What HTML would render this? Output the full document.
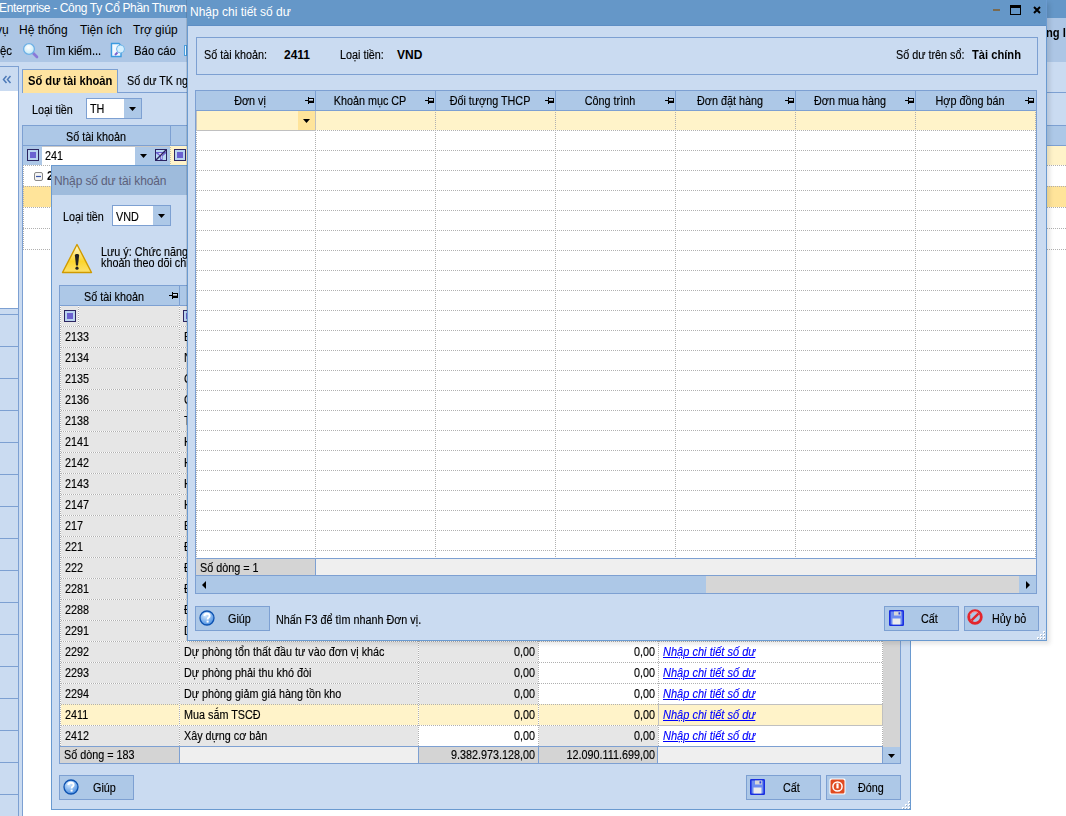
<!DOCTYPE html><html><head><meta charset="utf-8"><style>
*{margin:0;padding:0;box-sizing:border-box}
html,body{width:1066px;height:816px;overflow:hidden;background:#fff;font-family:"Liberation Sans",sans-serif;font-size:12px;color:#000}
div{position:absolute}
.t,.tb,.u{white-space:nowrap;line-height:13px;font-size:12px}
.t{transform:scaleX(0.9);transform-origin:0 0;-webkit-text-stroke:0.15px currentColor}
.tb{font-weight:bold;transform:scaleX(0.93);transform-origin:0 0}
.hd{height:1px;background-image:linear-gradient(to right,#b0b0b0 50%,transparent 50%);background-size:2px 1px}
.vd{width:1px;background-image:linear-gradient(to bottom,#b0b0b0 50%,transparent 50%);background-size:1px 2px}
.vdy{background-image:linear-gradient(to bottom,#c8c0a0 50%,transparent 50%)}
.lnk{color:#0000ff;font-style:italic;text-decoration:underline}
</style></head><body>
<div style="left:0px;top:0px;width:1066px;height:18px;background:#6597c8"></div>
<div class="u" style="left:-1px;top:2px;color:#fff;letter-spacing:-0.35px">Enterprise - Công Ty Cổ Phần Thươn</div>
<div style="left:0px;top:18px;width:1066px;height:44px;background:#adc6e5"></div>
<div class="u" style="left:-4px;top:24px;">vụ</div>
<div class="u" style="left:19px;top:24px;">Hệ thống</div>
<div class="u" style="left:80px;top:24px;">Tiện ích</div>
<div class="u" style="left:133px;top:24px;">Trợ giúp</div>
<div class="tb" style="left:1046px;top:27px;">ng l</div>
<div class="t" style="left:0px;top:45px;transform:scaleX(0.95)">ệc</div>
<svg style="position:absolute;left:22px;top:42px" width="17" height="17" viewBox="0 0 17 17"><defs><radialGradient id="sg" cx="0.45" cy="0.35" r="0.7"><stop offset="0" stop-color="#ffffff"/><stop offset="1" stop-color="#bfe6f5"/></radialGradient></defs><path d="M11 11L15 15" stroke="#8a78d8" stroke-width="2.6" stroke-linecap="round"/><circle cx="7" cy="7" r="5.4" fill="url(#sg)" stroke="#6cb0e6" stroke-width="1.3"/></svg>
<div class="t" style="left:46px;top:45px;transform:scaleX(0.93)">Tìm kiếm...</div>
<svg style="position:absolute;left:110px;top:42px" width="17" height="16" viewBox="0 0 17 16"><path d="M1.5 1.5H9L11 3.5V14.5H1.5Z" fill="#f2f8ff" stroke="#3a9ae0" stroke-width="1.4"/><circle cx="10.5" cy="7" r="4" fill="#d6f0ff" stroke="#74b8e8" stroke-width="1"/><path d="M7.5 10.5L5 13" stroke="#7a62d0" stroke-width="2"/></svg>
<div class="t" style="left:134px;top:45px;transform:scaleX(0.95)">Báo cáo</div>
<div style="left:184px;top:45px;width:3px;height:11px;border:1px solid #4aa0e0;background:#e8f4ff"></div>
<div style="left:0px;top:62px;width:1066px;height:754px;background:#cadbf1"></div>
<div style="left:0px;top:66px;width:19px;height:26px;border:1px solid #7da0d2;border-left:none;background:#cadbf1"></div>
<svg style="position:absolute;left:2px;top:75px" width="11" height="9" viewBox="0 0 11 9"><path d="M4.5 1L1.5 4.5L4.5 8M8.5 1L5.5 4.5L8.5 8" fill="none" stroke="#4d7ab8" stroke-width="1.5"/></svg>
<div style="left:0px;top:91px;width:19px;height:217px;background:#fff;border-right:1px solid #7da0d2"></div>
<div style="left:0px;top:308px;width:19px;height:6px;background:#cadbf1;border-right:1px solid #7da0d2;border-top:1px solid #7da0d2"></div>
<div style="left:0px;top:314px;width:19px;height:33px;background:#cadbf1;border-right:1px solid #7da0d2;border-top:1px solid #7da0d2"></div>
<div style="left:0px;top:346px;width:19px;height:33px;background:#cadbf1;border-right:1px solid #7da0d2;border-top:1px solid #7da0d2"></div>
<div style="left:0px;top:378px;width:19px;height:33px;background:#cadbf1;border-right:1px solid #7da0d2;border-top:1px solid #7da0d2"></div>
<div style="left:0px;top:410px;width:19px;height:33px;background:#cadbf1;border-right:1px solid #7da0d2;border-top:1px solid #7da0d2"></div>
<div style="left:0px;top:442px;width:19px;height:33px;background:#cadbf1;border-right:1px solid #7da0d2;border-top:1px solid #7da0d2"></div>
<div style="left:0px;top:474px;width:19px;height:33px;background:#cadbf1;border-right:1px solid #7da0d2;border-top:1px solid #7da0d2"></div>
<div style="left:0px;top:506px;width:19px;height:33px;background:#cadbf1;border-right:1px solid #7da0d2;border-top:1px solid #7da0d2"></div>
<div style="left:0px;top:538px;width:19px;height:33px;background:#cadbf1;border-right:1px solid #7da0d2;border-top:1px solid #7da0d2"></div>
<div style="left:0px;top:570px;width:19px;height:33px;background:#cadbf1;border-right:1px solid #7da0d2;border-top:1px solid #7da0d2"></div>
<div style="left:0px;top:602px;width:19px;height:33px;background:#cadbf1;border-right:1px solid #7da0d2;border-top:1px solid #7da0d2"></div>
<div style="left:0px;top:634px;width:19px;height:33px;background:#cadbf1;border-right:1px solid #7da0d2;border-top:1px solid #7da0d2"></div>
<div style="left:0px;top:666px;width:19px;height:33px;background:#cadbf1;border-right:1px solid #7da0d2;border-top:1px solid #7da0d2"></div>
<div style="left:0px;top:698px;width:19px;height:33px;background:#cadbf1;border-right:1px solid #7da0d2;border-top:1px solid #7da0d2"></div>
<div style="left:0px;top:730px;width:19px;height:33px;background:#cadbf1;border-right:1px solid #7da0d2;border-top:1px solid #7da0d2"></div>
<div style="left:0px;top:762px;width:19px;height:33px;background:#cadbf1;border-right:1px solid #7da0d2;border-top:1px solid #7da0d2"></div>
<div style="left:0px;top:794px;width:19px;height:33px;background:#cadbf1;border-right:1px solid #7da0d2;border-top:1px solid #7da0d2"></div>
<div style="left:22px;top:69px;width:96px;height:24px;background:#fee3a0;border:1px solid #7da0d2;border-bottom:none"></div>
<div class="tb" style="left:28px;top:75px;">Số dư tài khoản</div>
<div class="t" style="left:127px;top:75px;">Số dư TK ngân hàng</div>
<div style="left:117px;top:92px;width:949px;height:1px;background:#7da0d2"></div>
<div class="t" style="left:32px;top:104px;">Loại tiền</div>
<div style="left:86px;top:98px;width:56px;height:21px;background:#fff;border:1px solid #7da0d2"></div>
<div class="t" style="left:90px;top:103px;">TH</div>
<div style="left:124px;top:99px;width:17px;height:19px;background:#adc8e7"></div>
<svg style="position:absolute;left:129px;top:107px" width="7" height="4" viewBox="0 0 7 4"><path d="M0 0H7L3.5 4Z" fill="#000"/></svg>
<div style="left:22px;top:125px;width:1044px;height:691px;background:#fff;border-left:1px solid #7da0d2"></div>
<div style="left:22px;top:125px;width:1044px;height:21px;background:#adc8e7;border-top:1px solid #7da0d2;border-bottom:1px solid #7da0d2;border-left:1px solid #7da0d2"></div>
<div class="t" style="left:66px;top:131px;">Số tài khoản</div>
<div style="left:170px;top:126px;width:1px;height:19px;background:#7da0d2"></div>
<div style="left:23px;top:146px;width:1043px;height:19px;background:#fff3c9"></div>
<div style="left:23px;top:146px;width:148px;height:19px;background:#adc8e7"></div>
<div style="left:42px;top:146px;width:93px;height:19px;background:#fff"></div>
<div style="left:42px;top:146px;width:129px;height:1px;background:#c8c8c8"></div>
<svg style="position:absolute;left:27px;top:149px" width="12" height="12" viewBox="0 0 12 12"><rect x="0.5" y="0.5" width="11" height="11" fill="#b9d3ef" stroke="#2c2560"/><rect x="3" y="3" width="6" height="6" fill="#6b62d0"/></svg>
<div class="t" style="left:45px;top:150px;">241</div>
<svg style="position:absolute;left:140px;top:154px" width="7" height="4" viewBox="0 0 7 4"><path d="M0 0H7L3.5 4Z" fill="#000"/></svg>
<svg style="position:absolute;left:155px;top:149px" width="12" height="12" viewBox="0 0 12 12"><rect x="0.5" y="0.5" width="11" height="11" fill="#b9d8f2" stroke="#2a2360"/><path d="M1 3H11V4.2L7.6 7.2V11H5V7.2L1 4.2Z" fill="#6a5fd0"/><path d="M3.2 4.2H8.8L6.6 6.6V10H5.9V6.6Z" fill="#fff"/><path d="M1 11L11 1" stroke="#2a2360" stroke-width="1.4"/></svg>
<div class="vd vdy" style="left:170px;top:146px;height:19px;background-position:0 1px;background-color:#fff8d8;"></div>
<svg style="position:absolute;left:174px;top:149px" width="12" height="12" viewBox="0 0 12 12"><rect x="0.5" y="0.5" width="11" height="11" fill="#b9d3ef" stroke="#2c2560"/><rect x="3" y="3" width="6" height="6" fill="#6b62d0"/></svg>
<div style="left:23px;top:186px;width:1043px;height:21px;background:#ffe49a"></div>
<div class="hd" style="left:23px;top:165px;width:1043px;"></div>
<div class="hd" style="left:23px;top:186px;width:1043px;"></div>
<div class="hd" style="left:23px;top:207px;width:1043px;"></div>
<div class="hd" style="left:23px;top:228px;width:1043px;"></div>
<div class="hd" style="left:23px;top:249px;width:1043px;"></div>
<div class="vd" style="left:23px;top:165px;height:84px;"></div>
<svg style="position:absolute;left:34px;top:172px" width="9" height="9" viewBox="0 0 9 9"><rect x="0.5" y="0.5" width="8" height="8" rx="1.5" fill="#f4f4f4" stroke="#8a8a8a"/><path d="M2 4.5H7" stroke="#3a55a8" stroke-width="1.2"/></svg>
<div class="tb" style="left:47px;top:170px;">2411</div>
<div style="left:51px;top:165px;width:860px;height:645px;background:#cadbf1;border:1px solid #6a9ad0"></div>
<div style="left:52px;top:166px;width:858px;height:29px;background:#9ebbdc"></div>
<div class="u" style="left:54px;top:175px;color:#5c5f7a;letter-spacing:-0.12px">Nhập số dư tài khoản</div>
<div class="t" style="left:63px;top:211px;">Loại tiền</div>
<div style="left:112px;top:205px;width:59px;height:21px;background:#fff;border:1px solid #7da0d2"></div>
<div class="t" style="left:116px;top:211px;">VND</div>
<div style="left:153px;top:206px;width:17px;height:19px;background:#adc8e7"></div>
<svg style="position:absolute;left:158px;top:214px" width="7" height="4" viewBox="0 0 7 4"><path d="M0 0H7L3.5 4Z" fill="#000"/></svg>
<svg style="position:absolute;left:61px;top:243px" width="32" height="31" viewBox="0 0 32 31"><defs><linearGradient id="wg" x1="0" y1="0" x2="0" y2="1"><stop offset="0" stop-color="#fffbe0"/><stop offset="0.6" stop-color="#fcd52c"/><stop offset="1" stop-color="#fde270"/></linearGradient></defs><path d="M16 1.5L30.5 29.5H1.5Z" fill="url(#wg)" stroke="#d09a00" stroke-width="1.4" stroke-linejoin="round"/><path d="M13.9 12.5C13.9 10.6 18.1 10.6 18.1 12.5L17 22.5H15Z" fill="#222"/><circle cx="16" cy="25.2" r="1.6" fill="#222"/></svg>
<div class="t" style="left:101px;top:246px;">Lưu ý: Chức năng nhập số dư cho các tài</div>
<div class="t" style="left:101px;top:257px;">khoản theo dõi chi tiết</div>
<div style="left:59px;top:285px;width:842px;height:479px;background:#fff;border:1px solid #7da0d2"></div>
<div style="left:60px;top:286px;width:840px;height:20px;background:#adc8e7;border-bottom:1px solid #7da0d2"></div>
<div class="t" style="left:84px;top:291px;">Số tài khoản</div>
<svg style="position:absolute;left:169px;top:292px" width="9" height="7" viewBox="0 0 9 7"><g fill="#000"><rect x="0" y="3" width="3" height="1"/><rect x="3" y="0" width="1" height="7"/><rect x="4" y="1" width="5" height="1"/><rect x="4" y="4" width="5" height="2"/><rect x="8" y="1" width="1" height="5"/></g><rect x="4" y="2" width="4" height="2" fill="#d2e2f6"/><rect x="4" y="3" width="4" height="1" fill="#8c96a4"/></svg>
<div style="left:179px;top:286px;width:1px;height:19px;background:#7da0d2"></div>
<div style="left:60px;top:306px;width:822px;height:20px;background:#e6e6e6"></div>
<svg style="position:absolute;left:64px;top:310px" width="12" height="12" viewBox="0 0 12 12"><rect x="0.5" y="0.5" width="11" height="11" fill="#b9d3ef" stroke="#2c2560"/><rect x="3" y="3" width="6" height="6" fill="#6b62d0"/></svg>
<div class="vd" style="left:78px;top:306px;height:20px;background-position:0 1px;background-color:#fff;"></div>
<div class="vd" style="left:179px;top:306px;height:20px;background-position:0 1px;background-color:#fff;"></div>
<svg style="position:absolute;left:183px;top:310px" width="12" height="12" viewBox="0 0 12 12"><rect x="0.5" y="0.5" width="11" height="11" fill="#b9d3ef" stroke="#2c2560"/><rect x="3" y="3" width="6" height="6" fill="#6b62d0"/></svg>
<div style="left:60px;top:326px;width:822px;height:21px;background:#e6e6e6"></div>
<div style="left:538px;top:327px;width:120px;height:20px;background:#fff"></div>
<div style="left:658px;top:327px;width:224px;height:20px;background:#fff"></div>
<div class="hd" style="left:60px;top:326px;width:822px;background-position:1px 0;background-color:#fff;"></div>
<div class="t" style="left:65px;top:331px;">2133</div>
<div class="t" style="left:184px;top:331px;">Bản quyền, bằng sáng chế</div>
<div class="t" style="left:425px;top:331px;width:110px;text-align:right;transform-origin:100% 0;">0,00</div>
<div class="t" style="left:545px;top:331px;width:110px;text-align:right;transform-origin:100% 0;">0,00</div>
<div class="t lnk" style="left:663px;top:331px;transform:scaleX(0.92)">Nhập chi tiết số dư</div>
<div style="left:60px;top:347px;width:822px;height:21px;background:#e6e6e6"></div>
<div style="left:538px;top:348px;width:120px;height:20px;background:#fff"></div>
<div style="left:658px;top:348px;width:224px;height:20px;background:#fff"></div>
<div class="hd" style="left:60px;top:347px;width:822px;background-position:1px 0;background-color:#fff;"></div>
<div class="t" style="left:65px;top:352px;">2134</div>
<div class="t" style="left:184px;top:352px;">Nhãn hiệu, tên thương mại</div>
<div class="t" style="left:425px;top:352px;width:110px;text-align:right;transform-origin:100% 0;">0,00</div>
<div class="t" style="left:545px;top:352px;width:110px;text-align:right;transform-origin:100% 0;">0,00</div>
<div class="t lnk" style="left:663px;top:352px;transform:scaleX(0.92)">Nhập chi tiết số dư</div>
<div style="left:60px;top:368px;width:822px;height:21px;background:#e6e6e6"></div>
<div style="left:538px;top:369px;width:120px;height:20px;background:#fff"></div>
<div style="left:658px;top:369px;width:224px;height:20px;background:#fff"></div>
<div class="hd" style="left:60px;top:368px;width:822px;background-position:1px 0;background-color:#fff;"></div>
<div class="t" style="left:65px;top:373px;">2135</div>
<div class="t" style="left:184px;top:373px;">Chương trình phần mềm</div>
<div class="t" style="left:425px;top:373px;width:110px;text-align:right;transform-origin:100% 0;">0,00</div>
<div class="t" style="left:545px;top:373px;width:110px;text-align:right;transform-origin:100% 0;">0,00</div>
<div class="t lnk" style="left:663px;top:373px;transform:scaleX(0.92)">Nhập chi tiết số dư</div>
<div style="left:60px;top:389px;width:822px;height:21px;background:#e6e6e6"></div>
<div style="left:538px;top:390px;width:120px;height:20px;background:#fff"></div>
<div style="left:658px;top:390px;width:224px;height:20px;background:#fff"></div>
<div class="hd" style="left:60px;top:389px;width:822px;background-position:1px 0;background-color:#fff;"></div>
<div class="t" style="left:65px;top:394px;">2136</div>
<div class="t" style="left:184px;top:394px;">Giấy phép và giấy phép nhượng quyền</div>
<div class="t" style="left:425px;top:394px;width:110px;text-align:right;transform-origin:100% 0;">0,00</div>
<div class="t" style="left:545px;top:394px;width:110px;text-align:right;transform-origin:100% 0;">0,00</div>
<div class="t lnk" style="left:663px;top:394px;transform:scaleX(0.92)">Nhập chi tiết số dư</div>
<div style="left:60px;top:410px;width:822px;height:21px;background:#e6e6e6"></div>
<div style="left:538px;top:411px;width:120px;height:20px;background:#fff"></div>
<div style="left:658px;top:411px;width:224px;height:20px;background:#fff"></div>
<div class="hd" style="left:60px;top:410px;width:822px;background-position:1px 0;background-color:#fff;"></div>
<div class="t" style="left:65px;top:415px;">2138</div>
<div class="t" style="left:184px;top:415px;">TSCĐ vô hình khác</div>
<div class="t" style="left:425px;top:415px;width:110px;text-align:right;transform-origin:100% 0;">0,00</div>
<div class="t" style="left:545px;top:415px;width:110px;text-align:right;transform-origin:100% 0;">0,00</div>
<div class="t lnk" style="left:663px;top:415px;transform:scaleX(0.92)">Nhập chi tiết số dư</div>
<div style="left:60px;top:431px;width:822px;height:21px;background:#e6e6e6"></div>
<div style="left:538px;top:432px;width:120px;height:20px;background:#fff"></div>
<div style="left:658px;top:432px;width:224px;height:20px;background:#fff"></div>
<div class="hd" style="left:60px;top:431px;width:822px;background-position:1px 0;background-color:#fff;"></div>
<div class="t" style="left:65px;top:436px;">2141</div>
<div class="t" style="left:184px;top:436px;">Hao mòn TSCĐ hữu hình</div>
<div class="t" style="left:425px;top:436px;width:110px;text-align:right;transform-origin:100% 0;">0,00</div>
<div class="t" style="left:545px;top:436px;width:110px;text-align:right;transform-origin:100% 0;">0,00</div>
<div class="t lnk" style="left:663px;top:436px;transform:scaleX(0.92)">Nhập chi tiết số dư</div>
<div style="left:60px;top:452px;width:822px;height:21px;background:#e6e6e6"></div>
<div style="left:538px;top:453px;width:120px;height:20px;background:#fff"></div>
<div style="left:658px;top:453px;width:224px;height:20px;background:#fff"></div>
<div class="hd" style="left:60px;top:452px;width:822px;background-position:1px 0;background-color:#fff;"></div>
<div class="t" style="left:65px;top:457px;">2142</div>
<div class="t" style="left:184px;top:457px;">Hao mòn TSCĐ thuê tài chính</div>
<div class="t" style="left:425px;top:457px;width:110px;text-align:right;transform-origin:100% 0;">0,00</div>
<div class="t" style="left:545px;top:457px;width:110px;text-align:right;transform-origin:100% 0;">0,00</div>
<div class="t lnk" style="left:663px;top:457px;transform:scaleX(0.92)">Nhập chi tiết số dư</div>
<div style="left:60px;top:473px;width:822px;height:21px;background:#e6e6e6"></div>
<div style="left:538px;top:474px;width:120px;height:20px;background:#fff"></div>
<div style="left:658px;top:474px;width:224px;height:20px;background:#fff"></div>
<div class="hd" style="left:60px;top:473px;width:822px;background-position:1px 0;background-color:#fff;"></div>
<div class="t" style="left:65px;top:478px;">2143</div>
<div class="t" style="left:184px;top:478px;">Hao mòn TSCĐ vô hình</div>
<div class="t" style="left:425px;top:478px;width:110px;text-align:right;transform-origin:100% 0;">0,00</div>
<div class="t" style="left:545px;top:478px;width:110px;text-align:right;transform-origin:100% 0;">0,00</div>
<div class="t lnk" style="left:663px;top:478px;transform:scaleX(0.92)">Nhập chi tiết số dư</div>
<div style="left:60px;top:494px;width:822px;height:21px;background:#e6e6e6"></div>
<div style="left:538px;top:495px;width:120px;height:20px;background:#fff"></div>
<div style="left:658px;top:495px;width:224px;height:20px;background:#fff"></div>
<div class="hd" style="left:60px;top:494px;width:822px;background-position:1px 0;background-color:#fff;"></div>
<div class="t" style="left:65px;top:499px;">2147</div>
<div class="t" style="left:184px;top:499px;">Hao mòn bất động sản đầu tư</div>
<div class="t" style="left:425px;top:499px;width:110px;text-align:right;transform-origin:100% 0;">0,00</div>
<div class="t" style="left:545px;top:499px;width:110px;text-align:right;transform-origin:100% 0;">0,00</div>
<div class="t lnk" style="left:663px;top:499px;transform:scaleX(0.92)">Nhập chi tiết số dư</div>
<div style="left:60px;top:515px;width:822px;height:21px;background:#e6e6e6"></div>
<div style="left:538px;top:516px;width:120px;height:20px;background:#fff"></div>
<div style="left:658px;top:516px;width:224px;height:20px;background:#fff"></div>
<div class="hd" style="left:60px;top:515px;width:822px;background-position:1px 0;background-color:#fff;"></div>
<div class="t" style="left:65px;top:520px;">217</div>
<div class="t" style="left:184px;top:520px;">Bất động sản đầu tư</div>
<div class="t" style="left:425px;top:520px;width:110px;text-align:right;transform-origin:100% 0;">0,00</div>
<div class="t" style="left:545px;top:520px;width:110px;text-align:right;transform-origin:100% 0;">0,00</div>
<div class="t lnk" style="left:663px;top:520px;transform:scaleX(0.92)">Nhập chi tiết số dư</div>
<div style="left:60px;top:536px;width:822px;height:21px;background:#e6e6e6"></div>
<div style="left:538px;top:537px;width:120px;height:20px;background:#fff"></div>
<div style="left:658px;top:537px;width:224px;height:20px;background:#fff"></div>
<div class="hd" style="left:60px;top:536px;width:822px;background-position:1px 0;background-color:#fff;"></div>
<div class="t" style="left:65px;top:541px;">221</div>
<div class="t" style="left:184px;top:541px;">Đầu tư vào công ty con</div>
<div class="t" style="left:425px;top:541px;width:110px;text-align:right;transform-origin:100% 0;">0,00</div>
<div class="t" style="left:545px;top:541px;width:110px;text-align:right;transform-origin:100% 0;">0,00</div>
<div class="t lnk" style="left:663px;top:541px;transform:scaleX(0.92)">Nhập chi tiết số dư</div>
<div style="left:60px;top:557px;width:822px;height:21px;background:#e6e6e6"></div>
<div style="left:538px;top:558px;width:120px;height:20px;background:#fff"></div>
<div style="left:658px;top:558px;width:224px;height:20px;background:#fff"></div>
<div class="hd" style="left:60px;top:557px;width:822px;background-position:1px 0;background-color:#fff;"></div>
<div class="t" style="left:65px;top:562px;">222</div>
<div class="t" style="left:184px;top:562px;">Đầu tư vào công ty liên doanh</div>
<div class="t" style="left:425px;top:562px;width:110px;text-align:right;transform-origin:100% 0;">0,00</div>
<div class="t" style="left:545px;top:562px;width:110px;text-align:right;transform-origin:100% 0;">0,00</div>
<div class="t lnk" style="left:663px;top:562px;transform:scaleX(0.92)">Nhập chi tiết số dư</div>
<div style="left:60px;top:578px;width:822px;height:21px;background:#e6e6e6"></div>
<div style="left:538px;top:579px;width:120px;height:20px;background:#fff"></div>
<div style="left:658px;top:579px;width:224px;height:20px;background:#fff"></div>
<div class="hd" style="left:60px;top:578px;width:822px;background-position:1px 0;background-color:#fff;"></div>
<div class="t" style="left:65px;top:583px;">2281</div>
<div class="t" style="left:184px;top:583px;">Đầu tư góp vốn vào đơn vị khác</div>
<div class="t" style="left:425px;top:583px;width:110px;text-align:right;transform-origin:100% 0;">0,00</div>
<div class="t" style="left:545px;top:583px;width:110px;text-align:right;transform-origin:100% 0;">0,00</div>
<div class="t lnk" style="left:663px;top:583px;transform:scaleX(0.92)">Nhập chi tiết số dư</div>
<div style="left:60px;top:599px;width:822px;height:21px;background:#e6e6e6"></div>
<div style="left:538px;top:600px;width:120px;height:20px;background:#fff"></div>
<div style="left:658px;top:600px;width:224px;height:20px;background:#fff"></div>
<div class="hd" style="left:60px;top:599px;width:822px;background-position:1px 0;background-color:#fff;"></div>
<div class="t" style="left:65px;top:604px;">2288</div>
<div class="t" style="left:184px;top:604px;">Đầu tư khác</div>
<div class="t" style="left:425px;top:604px;width:110px;text-align:right;transform-origin:100% 0;">0,00</div>
<div class="t" style="left:545px;top:604px;width:110px;text-align:right;transform-origin:100% 0;">0,00</div>
<div class="t lnk" style="left:663px;top:604px;transform:scaleX(0.92)">Nhập chi tiết số dư</div>
<div style="left:60px;top:620px;width:822px;height:21px;background:#e6e6e6"></div>
<div style="left:538px;top:621px;width:120px;height:20px;background:#fff"></div>
<div style="left:658px;top:621px;width:224px;height:20px;background:#fff"></div>
<div class="hd" style="left:60px;top:620px;width:822px;background-position:1px 0;background-color:#fff;"></div>
<div class="t" style="left:65px;top:625px;">2291</div>
<div class="t" style="left:184px;top:625px;">Dự phòng giảm giá chứng khoán</div>
<div class="t" style="left:425px;top:625px;width:110px;text-align:right;transform-origin:100% 0;">0,00</div>
<div class="t" style="left:545px;top:625px;width:110px;text-align:right;transform-origin:100% 0;">0,00</div>
<div class="t lnk" style="left:663px;top:625px;transform:scaleX(0.92)">Nhập chi tiết số dư</div>
<div style="left:60px;top:641px;width:822px;height:21px;background:#e6e6e6"></div>
<div style="left:538px;top:642px;width:120px;height:20px;background:#fff"></div>
<div style="left:658px;top:642px;width:224px;height:20px;background:#fff"></div>
<div class="hd" style="left:60px;top:641px;width:822px;background-position:1px 0;background-color:#fff;"></div>
<div class="t" style="left:65px;top:646px;">2292</div>
<div class="t" style="left:184px;top:646px;">Dự phòng tổn thất đầu tư vào đơn vị khác</div>
<div class="t" style="left:425px;top:646px;width:110px;text-align:right;transform-origin:100% 0;">0,00</div>
<div class="t" style="left:545px;top:646px;width:110px;text-align:right;transform-origin:100% 0;">0,00</div>
<div class="t lnk" style="left:663px;top:646px;transform:scaleX(0.92)">Nhập chi tiết số dư</div>
<div style="left:60px;top:662px;width:822px;height:21px;background:#e6e6e6"></div>
<div style="left:538px;top:663px;width:120px;height:20px;background:#fff"></div>
<div style="left:658px;top:663px;width:224px;height:20px;background:#fff"></div>
<div class="hd" style="left:60px;top:662px;width:822px;background-position:1px 0;background-color:#fff;"></div>
<div class="t" style="left:65px;top:667px;">2293</div>
<div class="t" style="left:184px;top:667px;">Dự phòng phải thu khó đòi</div>
<div class="t" style="left:425px;top:667px;width:110px;text-align:right;transform-origin:100% 0;">0,00</div>
<div class="t" style="left:545px;top:667px;width:110px;text-align:right;transform-origin:100% 0;">0,00</div>
<div class="t lnk" style="left:663px;top:667px;transform:scaleX(0.92)">Nhập chi tiết số dư</div>
<div style="left:60px;top:683px;width:822px;height:21px;background:#e6e6e6"></div>
<div style="left:538px;top:684px;width:120px;height:20px;background:#fff"></div>
<div style="left:658px;top:684px;width:224px;height:20px;background:#fff"></div>
<div class="hd" style="left:60px;top:683px;width:822px;background-position:1px 0;background-color:#fff;"></div>
<div class="t" style="left:65px;top:688px;">2294</div>
<div class="t" style="left:184px;top:688px;">Dự phòng giảm giá hàng tồn kho</div>
<div class="t" style="left:425px;top:688px;width:110px;text-align:right;transform-origin:100% 0;">0,00</div>
<div class="t" style="left:545px;top:688px;width:110px;text-align:right;transform-origin:100% 0;">0,00</div>
<div class="t lnk" style="left:663px;top:688px;transform:scaleX(0.92)">Nhập chi tiết số dư</div>
<div style="left:60px;top:704px;width:822px;height:21px;background:#fff3c9"></div>
<div class="hd" style="left:60px;top:704px;width:822px;background-position:1px 0;"></div>
<div class="t" style="left:65px;top:709px;">2411</div>
<div class="t" style="left:184px;top:709px;">Mua sắm TSCĐ</div>
<div class="t" style="left:425px;top:709px;width:110px;text-align:right;transform-origin:100% 0;">0,00</div>
<div class="t" style="left:545px;top:709px;width:110px;text-align:right;transform-origin:100% 0;">0,00</div>
<div class="t lnk" style="left:663px;top:709px;transform:scaleX(0.92)">Nhập chi tiết số dư</div>
<div style="left:60px;top:725px;width:822px;height:21px;background:#e6e6e6"></div>
<div style="left:418px;top:726px;width:120px;height:20px;background:#fff"></div>
<div style="left:658px;top:726px;width:224px;height:20px;background:#fff"></div>
<div class="hd" style="left:60px;top:725px;width:822px;background-position:1px 0;background-color:#fff;"></div>
<div class="t" style="left:65px;top:730px;">2412</div>
<div class="t" style="left:184px;top:730px;">Xây dựng cơ bản</div>
<div class="t" style="left:425px;top:730px;width:110px;text-align:right;transform-origin:100% 0;">0,00</div>
<div class="t" style="left:545px;top:730px;width:110px;text-align:right;transform-origin:100% 0;">0,00</div>
<div class="t lnk" style="left:663px;top:730px;transform:scaleX(0.92)">Nhập chi tiết số dư</div>
<div class="vd" style="left:179px;top:326px;height:420px;background-position:0 1px;background-color:#fff;"></div>
<div class="vd" style="left:418px;top:326px;height:420px;background-position:0 1px;background-color:#fff;"></div>
<div class="vd" style="left:538px;top:326px;height:420px;background-position:0 1px;background-color:#fff;"></div>
<div class="vd" style="left:658px;top:326px;height:420px;background-position:0 1px;background-color:#fff;"></div>
<div class="vd" style="left:60px;top:306px;height:440px;background-position:0 1px;background-color:#fff;"></div>
<div class="vd" style="left:882px;top:306px;height:440px;background-position:0 1px;background-color:#fff;"></div>
<div style="left:658px;top:704px;width:225px;height:22px;border:1px solid #c0c0c0"></div>
<div style="left:60px;top:746px;width:822px;height:17px;background:#efefef;border-top:1px solid #7da0d2"></div>
<div style="left:60px;top:747px;width:119px;height:16px;background:#d4d4d4"></div>
<div style="left:418px;top:747px;width:240px;height:16px;background:#d4d4d4;border-left:1px solid #7da0d2;border-right:1px solid #7da0d2"></div>
<div style="left:538px;top:747px;width:1px;height:16px;background:#7da0d2"></div>
<div style="left:179px;top:747px;width:1px;height:16px;background:#7da0d2"></div>
<div class="t" style="left:64px;top:749px;">Số dòng = 183</div>
<div class="t" style="left:417px;top:749px;width:118px;text-align:right;transform-origin:100% 0;">9.382.973.128,00</div>
<div class="t" style="left:537px;top:749px;width:118px;text-align:right;transform-origin:100% 0;">12.090.111.699,00</div>
<div style="left:883px;top:286px;width:17px;height:477px;background:#d4d4d4"></div>
<div style="left:882px;top:746px;width:1px;height:17px;background:#7da0d2"></div>
<div style="left:883px;top:747px;width:17px;height:16px;background:#adc8e7"></div>
<svg style="position:absolute;left:888px;top:754px" width="7" height="4" viewBox="0 0 7 4"><path d="M0 0H7L3.5 4Z" fill="#000"/></svg>
<div style="left:59px;top:775px;width:75px;height:25px;background:#adc8e7;border:1px solid #7da0d2"></div>
<div class="t" style="left:93px;top:782px;">Giúp</div>
<svg style="position:absolute;left:63px;top:779px" width="16" height="16" viewBox="0 0 16 16"><defs><radialGradient id="hg" cx="0.4" cy="0.3" r="0.8"><stop offset="0" stop-color="#d8ecff"/><stop offset="1" stop-color="#3a84de"/></radialGradient></defs><circle cx="8" cy="8" r="7" fill="url(#hg)" stroke="#0d52b0" stroke-width="1.3"/><path d="M5.4 6C5.4 4.4 6.6 3.7 8 3.7C9.6 3.7 10.6 4.6 10.6 5.9C10.6 7.5 8.6 7.6 8.6 9.4" fill="none" stroke="#fff" stroke-width="1.9"/><rect x="7.6" y="10.6" width="2" height="2" fill="#fff"/></svg>
<div style="left:746px;top:775px;width:75px;height:25px;background:#adc8e7;border:1px solid #7da0d2"></div>
<div class="t" style="left:783px;top:782px;">Cất</div>
<svg style="position:absolute;left:750px;top:779px" width="15" height="16" viewBox="0 0 15 16"><rect x="0.8" y="0.8" width="13.4" height="14.4" rx="0.5" fill="#6d8cf0" stroke="#1a2fe0" stroke-width="1.6"/><rect x="5" y="1.5" width="7" height="4" fill="#d8d8d8"/><rect x="9.5" y="2.3" width="1.8" height="2.2" fill="#2a40e0"/><rect x="3.5" y="8.5" width="8" height="6" fill="#ececec"/></svg>
<div style="left:826px;top:775px;width:75px;height:25px;background:#adc8e7;border:1px solid #7da0d2"></div>
<div class="t" style="left:858px;top:782px;">Đóng</div>
<svg style="position:absolute;left:829px;top:778px" width="17" height="17" viewBox="0 0 17 17"><rect x="0.5" y="0.5" width="16" height="16" rx="1.5" fill="#fff"/><rect x="1.5" y="1.5" width="14" height="14" rx="1.5" fill="#e04a20"/><circle cx="8.5" cy="8.5" r="4.6" fill="none" stroke="#fff" stroke-width="1.5"/><rect x="7.4" y="5.4" width="2.2" height="5" fill="#fff"/></svg>
<svg style="position:absolute;left:902px;top:801px" width="8" height="8" viewBox="0 0 8 8"><rect x="6" y="0" width="2" height="2" fill="#fff"/><rect x="7" y="1" width="1" height="1" fill="#9aa8b8"/><rect x="3" y="3" width="2" height="2" fill="#fff"/><rect x="4" y="4" width="1" height="1" fill="#9aa8b8"/><rect x="6" y="3" width="2" height="2" fill="#fff"/><rect x="7" y="4" width="1" height="1" fill="#9aa8b8"/><rect x="0" y="6" width="2" height="2" fill="#fff"/><rect x="1" y="7" width="1" height="1" fill="#9aa8b8"/><rect x="3" y="6" width="2" height="2" fill="#fff"/><rect x="4" y="7" width="1" height="1" fill="#9aa8b8"/><rect x="6" y="6" width="2" height="2" fill="#fff"/><rect x="7" y="7" width="1" height="1" fill="#9aa8b8"/></svg>
<div style="left:190px;top:3px;width:860px;height:641px;background:rgba(0,0,0,0.10);filter:blur(2px)"></div>
<div style="left:186px;top:0px;width:1px;height:641px;background:rgba(40,40,40,0.14)"></div>
<div style="left:187px;top:-1px;width:860px;height:642px;background:#cadbf1;border:1px solid #6a9ad0"></div>
<div style="left:187px;top:0px;width:859px;height:26px;background:#6597c8"></div>
<div style="left:187px;top:25px;width:859px;height:1px;background:#5e8ec4"></div>
<div class="u" style="left:190px;top:6px;color:#fff">Nhập chi tiết số dư</div>
<div style="left:993px;top:9px;width:7px;height:2px;background:#7a6a50"></div>
<div style="left:1010px;top:5px;width:11px;height:10px;border:1px solid #000;border-top:3px solid #000"></div>
<svg style="position:absolute;left:1033px;top:6px" width="8" height="8" viewBox="0 0 8 8"><path d="M1 1L7 7M7 1L1 7" stroke="#000" stroke-width="2"/></svg>
<div style="left:196px;top:37px;width:842px;height:38px;border:1px solid #7da0d2"></div>
<div class="t" style="left:204px;top:49px;">Số tài khoản:</div>
<div class="tb" style="left:284px;top:49px;transform:none">2411</div>
<div class="t" style="left:340px;top:49px;">Loại tiền:</div>
<div class="tb" style="left:397px;top:49px;transform:none">VND</div>
<div class="t" style="left:896px;top:49px;">Số dư trên sổ:</div>
<div class="tb" style="left:972px;top:49px;">Tài chính</div>
<div style="left:195px;top:90px;width:842px;height:504px;background:#fff;border:1px solid #7da0d2"></div>
<div style="left:196px;top:91px;width:840px;height:20px;background:#adc8e7;border-bottom:1px solid #7da0d2"></div>
<div class="t" style="left:190px;top:95px;width:120px;text-align:center;transform-origin:50% 0;">Đơn vị</div>
<div style="left:315px;top:91px;width:1px;height:19px;background:#7da0d2"></div>
<svg style="position:absolute;left:305px;top:97px" width="9" height="7" viewBox="0 0 9 7"><g fill="#000"><rect x="0" y="3" width="3" height="1"/><rect x="3" y="0" width="1" height="7"/><rect x="4" y="1" width="5" height="1"/><rect x="4" y="4" width="5" height="2"/><rect x="8" y="1" width="1" height="5"/></g><rect x="4" y="2" width="4" height="2" fill="#d2e2f6"/><rect x="4" y="3" width="4" height="1" fill="#8c96a4"/></svg>
<div class="t" style="left:310px;top:95px;width:120px;text-align:center;transform-origin:50% 0;">Khoản mục CP</div>
<div style="left:435px;top:91px;width:1px;height:19px;background:#7da0d2"></div>
<svg style="position:absolute;left:425px;top:97px" width="9" height="7" viewBox="0 0 9 7"><g fill="#000"><rect x="0" y="3" width="3" height="1"/><rect x="3" y="0" width="1" height="7"/><rect x="4" y="1" width="5" height="1"/><rect x="4" y="4" width="5" height="2"/><rect x="8" y="1" width="1" height="5"/></g><rect x="4" y="2" width="4" height="2" fill="#d2e2f6"/><rect x="4" y="3" width="4" height="1" fill="#8c96a4"/></svg>
<div class="t" style="left:430px;top:95px;width:120px;text-align:center;transform-origin:50% 0;">Đối tượng THCP</div>
<div style="left:555px;top:91px;width:1px;height:19px;background:#7da0d2"></div>
<svg style="position:absolute;left:545px;top:97px" width="9" height="7" viewBox="0 0 9 7"><g fill="#000"><rect x="0" y="3" width="3" height="1"/><rect x="3" y="0" width="1" height="7"/><rect x="4" y="1" width="5" height="1"/><rect x="4" y="4" width="5" height="2"/><rect x="8" y="1" width="1" height="5"/></g><rect x="4" y="2" width="4" height="2" fill="#d2e2f6"/><rect x="4" y="3" width="4" height="1" fill="#8c96a4"/></svg>
<div class="t" style="left:550px;top:95px;width:120px;text-align:center;transform-origin:50% 0;">Công trình</div>
<div style="left:675px;top:91px;width:1px;height:19px;background:#7da0d2"></div>
<svg style="position:absolute;left:665px;top:97px" width="9" height="7" viewBox="0 0 9 7"><g fill="#000"><rect x="0" y="3" width="3" height="1"/><rect x="3" y="0" width="1" height="7"/><rect x="4" y="1" width="5" height="1"/><rect x="4" y="4" width="5" height="2"/><rect x="8" y="1" width="1" height="5"/></g><rect x="4" y="2" width="4" height="2" fill="#d2e2f6"/><rect x="4" y="3" width="4" height="1" fill="#8c96a4"/></svg>
<div class="t" style="left:670px;top:95px;width:120px;text-align:center;transform-origin:50% 0;">Đơn đặt hàng</div>
<div style="left:795px;top:91px;width:1px;height:19px;background:#7da0d2"></div>
<svg style="position:absolute;left:785px;top:97px" width="9" height="7" viewBox="0 0 9 7"><g fill="#000"><rect x="0" y="3" width="3" height="1"/><rect x="3" y="0" width="1" height="7"/><rect x="4" y="1" width="5" height="1"/><rect x="4" y="4" width="5" height="2"/><rect x="8" y="1" width="1" height="5"/></g><rect x="4" y="2" width="4" height="2" fill="#d2e2f6"/><rect x="4" y="3" width="4" height="1" fill="#8c96a4"/></svg>
<div class="t" style="left:790px;top:95px;width:120px;text-align:center;transform-origin:50% 0;">Đơn mua hàng</div>
<div style="left:915px;top:91px;width:1px;height:19px;background:#7da0d2"></div>
<svg style="position:absolute;left:905px;top:97px" width="9" height="7" viewBox="0 0 9 7"><g fill="#000"><rect x="0" y="3" width="3" height="1"/><rect x="3" y="0" width="1" height="7"/><rect x="4" y="1" width="5" height="1"/><rect x="4" y="4" width="5" height="2"/><rect x="8" y="1" width="1" height="5"/></g><rect x="4" y="2" width="4" height="2" fill="#d2e2f6"/><rect x="4" y="3" width="4" height="1" fill="#8c96a4"/></svg>
<div class="t" style="left:910px;top:95px;width:120px;text-align:center;transform-origin:50% 0;">Hợp đồng bán</div>
<svg style="position:absolute;left:1025px;top:97px" width="9" height="7" viewBox="0 0 9 7"><g fill="#000"><rect x="0" y="3" width="3" height="1"/><rect x="3" y="0" width="1" height="7"/><rect x="4" y="1" width="5" height="1"/><rect x="4" y="4" width="5" height="2"/><rect x="8" y="1" width="1" height="5"/></g><rect x="4" y="2" width="4" height="2" fill="#d2e2f6"/><rect x="4" y="3" width="4" height="1" fill="#8c96a4"/></svg>
<div style="left:196px;top:111px;width:840px;height:19px;background:#fff3c9"></div>
<div style="left:298px;top:111px;width:17px;height:19px;background:#ffe49a"></div>
<div style="left:196px;top:130px;width:120px;height:1px;background:#c0c0c0"></div>
<div style="left:196px;top:111px;width:1px;height:20px;background:#c0c0c0"></div>
<div style="left:315px;top:111px;width:1px;height:20px;background:#c0c0c0"></div>
<svg style="position:absolute;left:303px;top:119px" width="7" height="4" viewBox="0 0 7 4"><path d="M0 0H7L3.5 4Z" fill="#000"/></svg>
<div class="hd" style="left:316px;top:130px;width:720px;background-position:1px 0;"></div>
<div class="hd" style="left:196px;top:150px;width:840px;background-position:1px 0;"></div>
<div class="hd" style="left:196px;top:170px;width:840px;background-position:1px 0;"></div>
<div class="hd" style="left:196px;top:190px;width:840px;background-position:1px 0;"></div>
<div class="hd" style="left:196px;top:210px;width:840px;background-position:1px 0;"></div>
<div class="hd" style="left:196px;top:230px;width:840px;background-position:1px 0;"></div>
<div class="hd" style="left:196px;top:250px;width:840px;background-position:1px 0;"></div>
<div class="hd" style="left:196px;top:270px;width:840px;background-position:1px 0;"></div>
<div class="hd" style="left:196px;top:290px;width:840px;background-position:1px 0;"></div>
<div class="hd" style="left:196px;top:310px;width:840px;background-position:1px 0;"></div>
<div class="hd" style="left:196px;top:330px;width:840px;background-position:1px 0;"></div>
<div class="hd" style="left:196px;top:350px;width:840px;background-position:1px 0;"></div>
<div class="hd" style="left:196px;top:370px;width:840px;background-position:1px 0;"></div>
<div class="hd" style="left:196px;top:390px;width:840px;background-position:1px 0;"></div>
<div class="hd" style="left:196px;top:410px;width:840px;background-position:1px 0;"></div>
<div class="hd" style="left:196px;top:430px;width:840px;background-position:1px 0;"></div>
<div class="hd" style="left:196px;top:450px;width:840px;background-position:1px 0;"></div>
<div class="hd" style="left:196px;top:470px;width:840px;background-position:1px 0;"></div>
<div class="hd" style="left:196px;top:490px;width:840px;background-position:1px 0;"></div>
<div class="hd" style="left:196px;top:510px;width:840px;background-position:1px 0;"></div>
<div class="hd" style="left:196px;top:530px;width:840px;background-position:1px 0;"></div>
<div class="hd" style="left:196px;top:550px;width:840px;background-position:1px 0;"></div>
<div class="vd" style="left:315px;top:131px;height:427px;background-position:0 1px;"></div>
<div class="vd" style="left:435px;top:111px;height:447px;background-position:0 1px;"></div>
<div class="vd" style="left:555px;top:111px;height:447px;background-position:0 1px;"></div>
<div class="vd" style="left:675px;top:111px;height:447px;background-position:0 1px;"></div>
<div class="vd" style="left:795px;top:111px;height:447px;background-position:0 1px;"></div>
<div class="vd" style="left:915px;top:111px;height:447px;background-position:0 1px;"></div>
<div class="vd" style="left:196px;top:131px;height:427px;background-position:0 1px;"></div>
<div class="vd" style="left:1035px;top:111px;height:447px;background-position:0 1px;"></div>
<div style="left:196px;top:558px;width:840px;height:17px;background:#efefef;border-top:1px solid #7da0d2"></div>
<div style="left:196px;top:559px;width:119px;height:16px;background:#d4d4d4"></div>
<div style="left:315px;top:559px;width:1px;height:16px;background:#7da0d2"></div>
<div class="t" style="left:200px;top:562px;">Số dòng = 1</div>
<div style="left:196px;top:575px;width:840px;height:18px;background:#d6d6d6;border-top:1px solid #7da0d2"></div>
<div style="left:196px;top:576px;width:510px;height:17px;background:#adc8e7"></div>
<div style="left:1019px;top:576px;width:17px;height:17px;background:#adc8e7"></div>
<svg style="position:absolute;left:202px;top:581px" width="4" height="8" viewBox="0 0 4 8"><path d="M4 0V8L0 4Z" fill="#000"/></svg>
<svg style="position:absolute;left:1026px;top:581px" width="4" height="8" viewBox="0 0 4 8"><path d="M0 0V8L4 4Z" fill="#000"/></svg>
<div style="left:195px;top:606px;width:75px;height:25px;background:#adc8e7;border:1px solid #7da0d2"></div>
<div class="t" style="left:228px;top:613px;">Giúp</div>
<svg style="position:absolute;left:199px;top:610px" width="16" height="16" viewBox="0 0 16 16"><defs><radialGradient id="hg" cx="0.4" cy="0.3" r="0.8"><stop offset="0" stop-color="#d8ecff"/><stop offset="1" stop-color="#3a84de"/></radialGradient></defs><circle cx="8" cy="8" r="7" fill="url(#hg)" stroke="#0d52b0" stroke-width="1.3"/><path d="M5.4 6C5.4 4.4 6.6 3.7 8 3.7C9.6 3.7 10.6 4.6 10.6 5.9C10.6 7.5 8.6 7.6 8.6 9.4" fill="none" stroke="#fff" stroke-width="1.9"/><rect x="7.6" y="10.6" width="2" height="2" fill="#fff"/></svg>
<div class="t" style="left:276px;top:614px;">Nhấn F3 để tìm nhanh Đơn vị.</div>
<div style="left:884px;top:606px;width:75px;height:25px;background:#adc8e7;border:1px solid #7da0d2"></div>
<div class="t" style="left:921px;top:613px;">Cất</div>
<svg style="position:absolute;left:889px;top:610px" width="15" height="16" viewBox="0 0 15 16"><rect x="0.8" y="0.8" width="13.4" height="14.4" rx="0.5" fill="#6d8cf0" stroke="#1a2fe0" stroke-width="1.6"/><rect x="5" y="1.5" width="7" height="4" fill="#d8d8d8"/><rect x="9.5" y="2.3" width="1.8" height="2.2" fill="#2a40e0"/><rect x="3.5" y="8.5" width="8" height="6" fill="#ececec"/></svg>
<div style="left:964px;top:606px;width:75px;height:25px;background:#adc8e7;border:1px solid #7da0d2"></div>
<div class="t" style="left:992px;top:613px;">Hủy bỏ</div>
<svg style="position:absolute;left:967px;top:609px" width="16" height="16" viewBox="0 0 16 16"><circle cx="8" cy="8" r="6.3" fill="none" stroke="#e3262c" stroke-width="2.8"/><path d="M3.2 6.2A5 5 0 0 1 11 3.6" fill="none" stroke="#ff9a9a" stroke-width="1"/><path d="M4.6 11.4L11.4 4.6" stroke="#e3262c" stroke-width="2.4"/></svg>
<svg style="position:absolute;left:1037px;top:631px" width="8" height="8" viewBox="0 0 8 8"><rect x="6" y="0" width="2" height="2" fill="#fff"/><rect x="7" y="1" width="1" height="1" fill="#9aa8b8"/><rect x="3" y="3" width="2" height="2" fill="#fff"/><rect x="4" y="4" width="1" height="1" fill="#9aa8b8"/><rect x="6" y="3" width="2" height="2" fill="#fff"/><rect x="7" y="4" width="1" height="1" fill="#9aa8b8"/><rect x="0" y="6" width="2" height="2" fill="#fff"/><rect x="1" y="7" width="1" height="1" fill="#9aa8b8"/><rect x="3" y="6" width="2" height="2" fill="#fff"/><rect x="4" y="7" width="1" height="1" fill="#9aa8b8"/><rect x="6" y="6" width="2" height="2" fill="#fff"/><rect x="7" y="7" width="1" height="1" fill="#9aa8b8"/></svg>
</body></html>
